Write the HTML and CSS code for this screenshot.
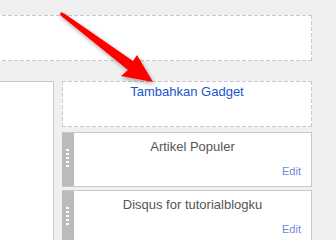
FILE: index.html
```html
<!DOCTYPE html>
<html lang="id">
<head>
    <meta charset="UTF-8">
    <meta name="viewport" content="width=device-width, initial-scale=1.0">
    <title>Tata Letak</title>
    <link rel="stylesheet" href="styles.css">
</head>
<body>
    <div class="layout">
        <div class="header-section dashed"></div>
        <div class="columns">
            <div class="main-col"></div>
            <div class="sidebar">
                <div class="add-gadget dashed"><a href="#">Tambahkan Gadget</a></div>
                <div class="widget">
                    <div class="handle"><span></span><span></span><span></span><span></span><span></span></div>
                    <div class="widget-body">
                        <div class="widget-title">Artikel Populer</div>
                        <a class="edit" href="#">Edit</a>
                    </div>
                </div>
                <div class="widget">
                    <div class="handle"><span></span><span></span><span></span><span></span><span></span></div>
                    <div class="widget-body">
                        <div class="widget-title">Disqus for tutorialblogku</div>
                        <a class="edit" href="#">Edit</a>
                    </div>
                </div>
            </div>
        </div>
    </div>

    <svg class="arrow" width="336" height="240" viewBox="0 0 336 240">
        <defs>
            <filter id="shadow" x="-20%" y="-20%" width="140%" height="140%">
                <feDropShadow dx="1" dy="2" stdDeviation="2" flood-color="#000" flood-opacity="0.35"/>
            </filter>
        </defs>
        <polygon points="61,12 65,14 133,61 137,55 153,82 121,76 128,70 60,15" fill="#ff0000" filter="url(#shadow)"/>
    </svg>
</body>
</html>
```

FILE: styles.css
```css
body {
    margin: 0;
    background-color: #f0f0f0;
    font-family: "Liberation Sans", Arial, sans-serif;
    overflow: hidden;
}

.layout {
    margin-left: -10px;
    width: 322px;
    height: 240px;
    box-sizing: border-box;
    padding-top: 15px;
    overflow: hidden;
}

/* dashed outline with longer dashes than the browser default */
.dashed {
    background:
        repeating-linear-gradient(90deg, #c8c8c8 0 4px, transparent 4px 6px) top / 100% 1px no-repeat,
        repeating-linear-gradient(90deg, #c8c8c8 0 4px, transparent 4px 6px) bottom / 100% 1px no-repeat,
        repeating-linear-gradient(180deg, #c8c8c8 0 4px, transparent 4px 6px) left / 1px 100% no-repeat,
        repeating-linear-gradient(180deg, #c8c8c8 0 4px, transparent 4px 6px) right / 1px 100% no-repeat,
        #fff;
}

.header-section {
    height: 46px;
}

.columns {
    display: flex;
    gap: 8px;
    margin-top: 20px;
}

.main-col {
    width: 64px;
    height: 170px;
    box-sizing: border-box;
    border: 1px solid #c8c8c8;
    background-color: #fff;
}

.sidebar {
    width: 250px;
}

.add-gadget {
    height: 46px;
    box-sizing: border-box;
    text-align: center;
    padding-top: 3px;
    font-size: 13px;
    line-height: 15px;
    margin-bottom: 5px;
}

.add-gadget a {
    color: #1a55cc;
    text-decoration: none;
}

.widget {
    display: flex;
    border: 1px solid #c8c8c8;
    border-left: none;
    background-color: #fff;
    margin-bottom: 3px;
}

.handle {
    width: 12px;
    box-sizing: border-box;
    padding: 16px 0 0 4px;
    background-color: #bbb;
}

.handle span {
    display: block;
    width: 3px;
    height: 2px;
    margin-bottom: 2px;
    background-color: #fff;
}

.widget-body {
    flex: 1;
    padding: 6px 10px 8px;
    text-align: center;
}

.widget-title {
    font-size: 13px;
    line-height: 15px;
    color: #555;
}

.edit {
    display: block;
    margin-top: 11px;
    text-align: right;
    font-size: 11px;
    line-height: 13px;
    color: #7089d6;
    text-decoration: none;
}

.arrow {
    position: absolute;
    top: 0;
    left: 0;
    pointer-events: none;
}
```
